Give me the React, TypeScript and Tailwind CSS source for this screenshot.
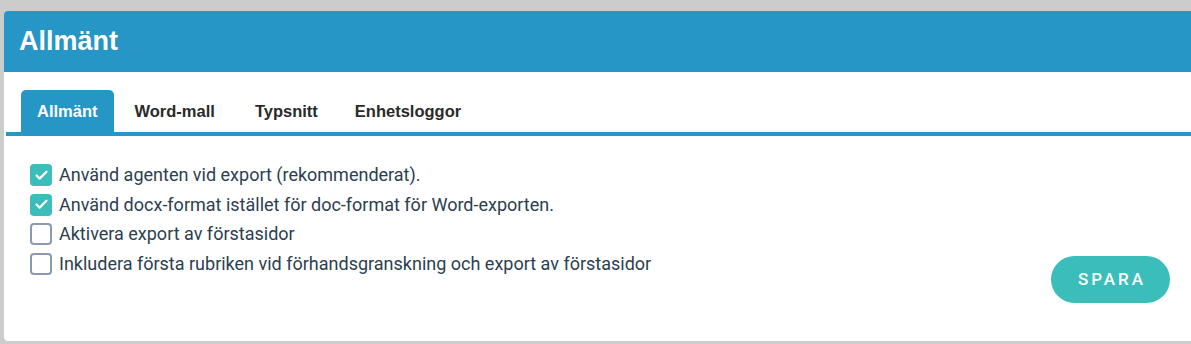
import { Check } from 'lucide-react';

const TABS = ['Allmänt', 'Word-mall', 'Typsnitt', 'Enhetsloggor'];

const OPTIONS = [
  { label: 'Använd agenten vid export (rekommenderat).', checked: true },
  { label: 'Använd docx-format istället för doc-format för Word-exporten.', checked: true },
  { label: 'Aktivera export av förstasidor', checked: false },
  { label: 'Inkludera första rubriken vid förhandsgranskning och export av förstasidor', checked: false },
];

export default function App() {
  return (
    <div className="h-[344px] w-[1191px] overflow-hidden bg-[#cccccc] pl-1 pt-[11px]">
      <div className="h-[330px] w-[1200px] overflow-hidden rounded-l-[4px] bg-white">
        <div className="flex h-[61px] items-center bg-[#2596c6] px-[15px]">
          <h1 className="font-['Liberation_Sans',Arial,sans-serif] text-[27px] font-bold text-white">
            Allmänt
          </h1>
        </div>

        <div className="ml-[2px] mt-[18px] flex border-b-[4px] border-[#2596c6] pl-[15px]">
          {TABS.map((t, i) => (
            <div
              key={t}
              className={`flex h-[42px] items-center rounded-t-[5px] px-4 font-['Liberation_Sans',Arial,sans-serif] text-[16.5px] font-bold ${
                i === 0 ? 'bg-[#2596c6] text-white' : 'text-[#2a2a2a]'
              } ${i === 1 ? 'mr-[8px]' : 'mr-[5px]'}`}
            >
              {t}
            </div>
          ))}
        </div>

        <div className="flex items-start justify-between pl-[26px] pr-[34px] pt-[28px]">
          <div className="flex flex-col">
            {OPTIONS.map((o) => (
              <label
                key={o.label}
                className="flex h-[29.5px] items-start gap-[7px] font-['Roboto',sans-serif] text-[18px] text-[#2c3e50]"
              >
                <span
                  className={`flex h-[22px] w-[22px] shrink-0 items-center justify-center rounded-[4px] ${
                    o.checked ? 'bg-[#3bbdbb]' : 'border-[2.5px] border-[#8a9bb0] bg-white'
                  }`}
                >
                  {o.checked && <Check className="h-[15px] w-[15px] text-white" strokeWidth={3.5} />}
                </span>
                <span className="leading-[22px]">{o.label}</span>
              </label>
            ))}
          </div>
          <button
            type="button"
            className="mt-[92px] h-[47px] w-[119px] rounded-full bg-[#3bbdbb] pl-[3px] font-['Roboto',sans-serif] text-[17px] font-medium tracking-[3px] text-white"
          >
            SPARA
          </button>
        </div>
      </div>
    </div>
  );
}
